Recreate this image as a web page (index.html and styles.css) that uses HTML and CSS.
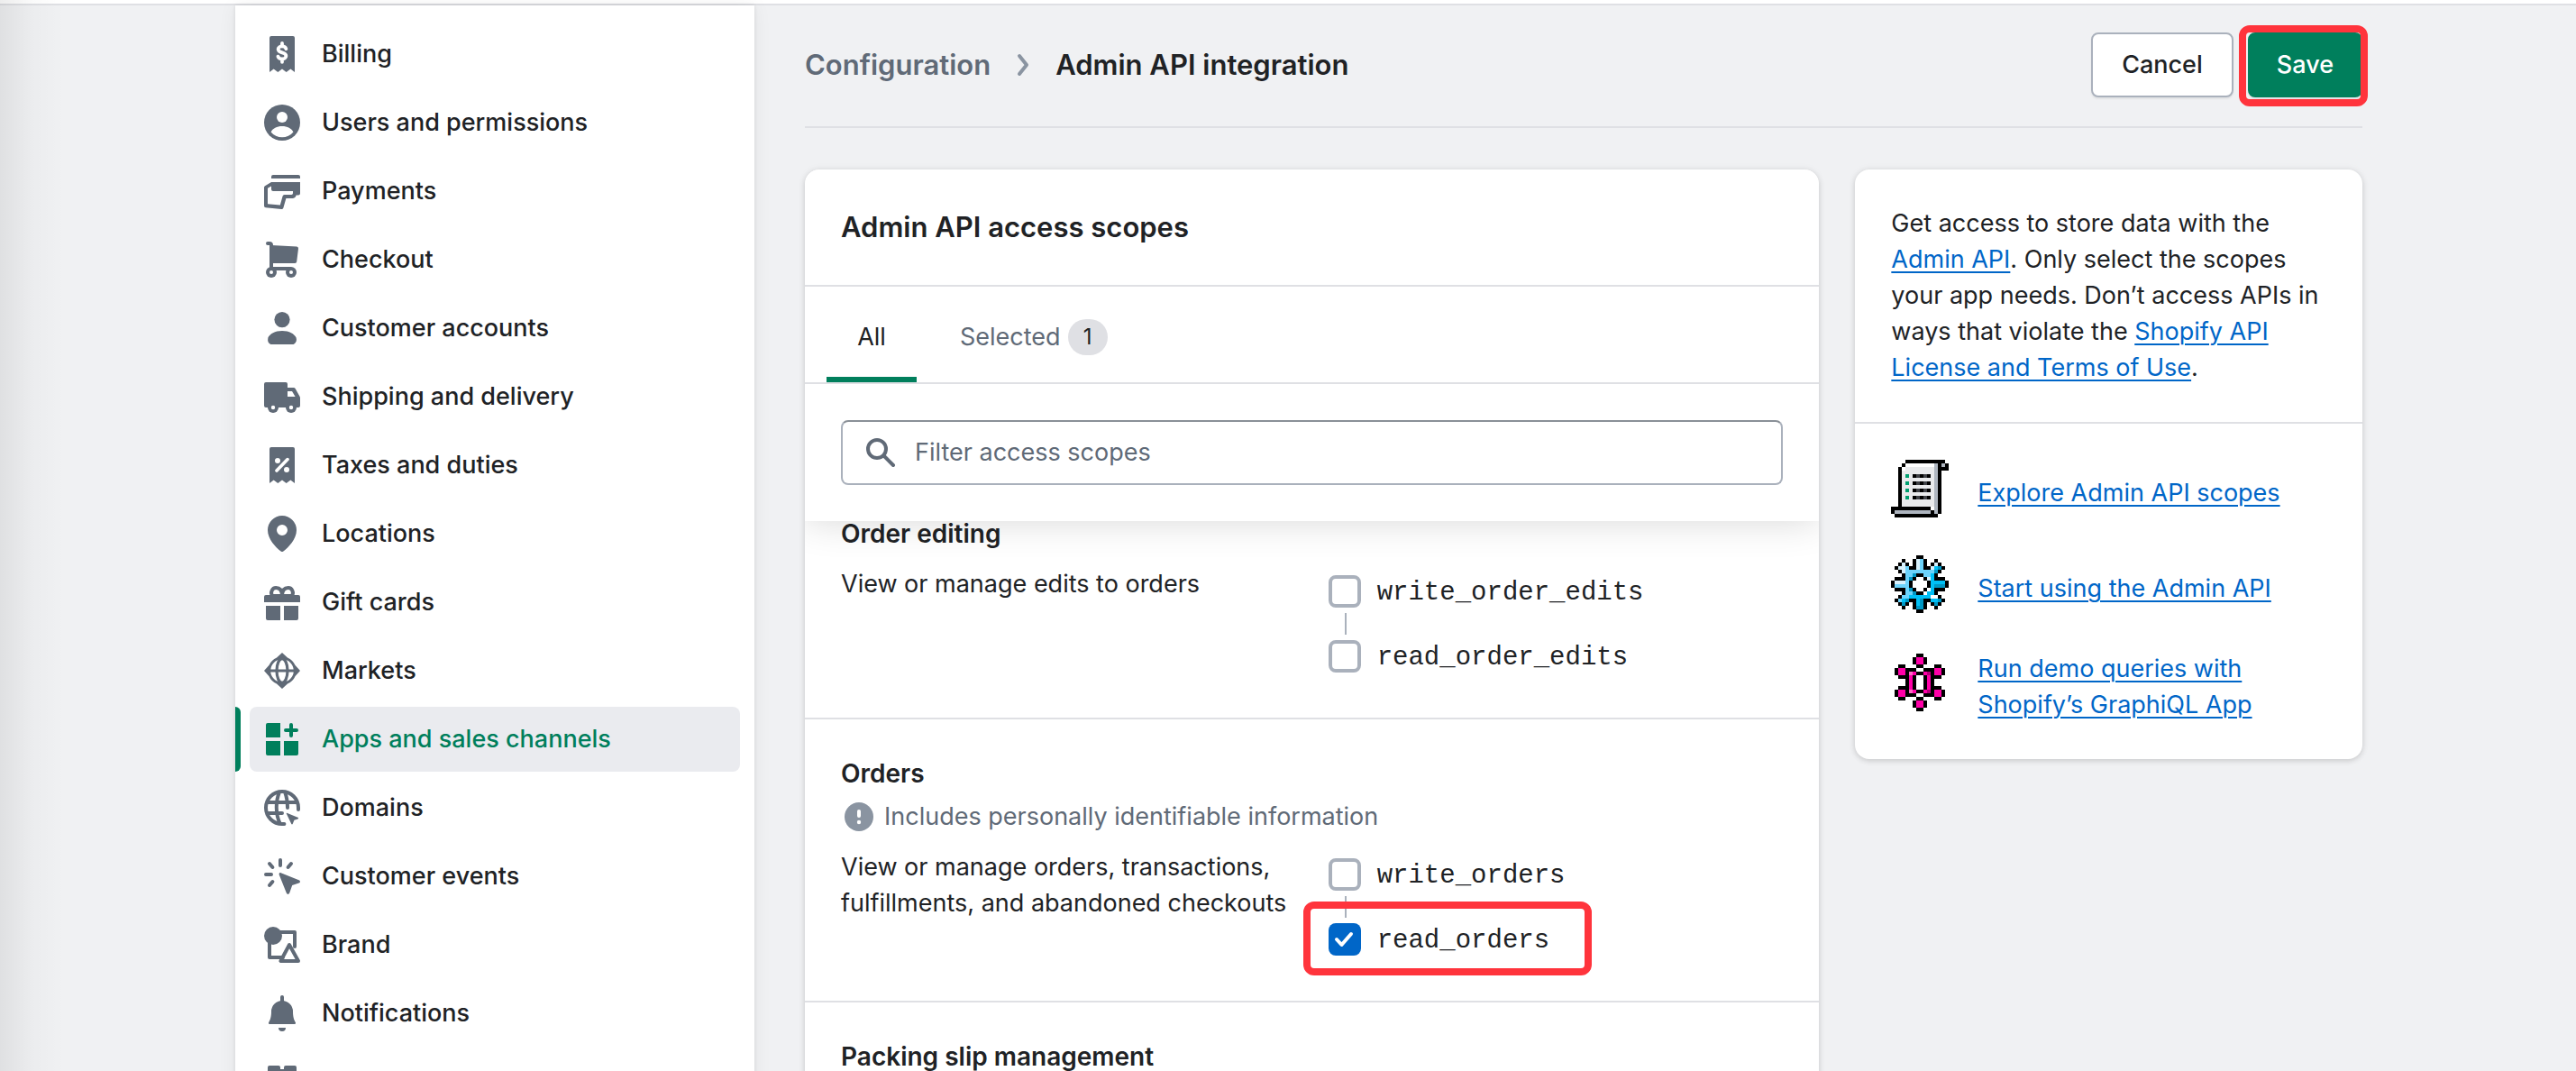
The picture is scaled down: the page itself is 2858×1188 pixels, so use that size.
FILE: index.html
```html
<!DOCTYPE html>
<html lang="en">
<head>
<meta charset="utf-8">
<meta name="viewport" content="width=device-width, initial-scale=1">
<title>Admin API integration</title>
<link rel="stylesheet" href="styles.css">
</head>
<body>
<div class="app">
  <div class="topbar"></div>
  <div class="frame">
    <nav class="sidebar" aria-label="Settings">
      <a class="nav-item" href="#"><svg class="icon" viewBox="0 0 20 20"><path d="M4 0h12a1 1 0 0 1 1 1v19l-2.33-1.8L12.33 20 10 18.2 7.67 20l-2.34-1.8L3 20V1a1 1 0 0 1 1-1z"/><path class="cut-line" stroke-width="1.9" d="M12.2 7.1C11.9 6.1 11 5.7 10 5.7c-1.200 0-2.200.6-2.200 1.600 0 2.500 4.400 1.300 4.400 3.700 0 1.100-1 1.700-2.200 1.700-1.100 0-2-.5-2.300-1.400M10 4v1.400M10 13v1.400"/></svg>Billing</a>
      <a class="nav-item" href="#"><svg class="icon" viewBox="0 0 20 20"><circle cx="10" cy="10" r="10"/><circle class="cut" cx="10" cy="7" r="3"/><path class="cut" d="M10 12c-2.900 0-5.300 1.300-6.200 3.200a8 8 0 0 0 12.400 0C15.300 13.300 12.900 12 10 12z"/></svg>Users and permissions</a>
      <a class="nav-item" href="#"><svg class="icon" viewBox="0 0 20 20"><path d="M5 1h14a1 1 0 0 1 1 1v1H4V2a1 1 0 0 1 1-1z"/><path fill-rule="evenodd" d="M4 5h16v6.200a1 1 0 0 1-1 1h-1.200c-.2 1-1 1.800-2 1.800h-3.600l-1.500 5.200a1 1 0 0 1-1.100.8l-8.700-.9a1 1 0 0 1-.9-1V8a1 1 0 0 1 .5-.9zM4 7.200L2 8.400v8.700l6.900.7 1.400-5a1 1 0 0 1 1-.8h3.900a.9.9 0 0 0 .8-.9V10H5a1 1 0 0 1-1-1z"/></svg>Payments</a>
      <a class="nav-item" href="#"><svg class="icon" viewBox="0 0 20 20"><path class="line" stroke-width="2" d="M2 1h1a1 1 0 0 1 1 1v12.500"/><path d="M4 2l14.100.8a1 1 0 0 1 .9 1.100l-.9 7.200a1 1 0 0 1-1 .9H4zM3 14h12v2H3z"/><circle cx="4" cy="17" r="3"/><circle cx="15" cy="17" r="3"/><circle class="cut" cx="4" cy="17" r="1"/><circle class="cut" cx="15" cy="17" r="1"/></svg>Checkout</a>
      <a class="nav-item" href="#"><svg class="icon" viewBox="0 0 20 20"><circle cx="10" cy="5.300" r="4.300"/><path d="M10 11.500c-4 0-6.800 1.700-7.800 3.800-.4 2 .1 3 1.100 3.400.3.200.6.300.9.300h11.600c.3 0 .6-.1.9-.3 1-.6 1.600-1.700 1.100-3.400-1-2.100-3.800-3.800-7.800-3.800z"/></svg>Customer accounts</a>
      <a class="nav-item" href="#"><svg class="icon" viewBox="0 0 20 20"><path d="M1 2h11a1 1 0 0 1 1 1v2h3.400a1 1 0 0 1 .9.500l2.400 4.200c.2.300.3.600.3 1V15a1 1 0 0 1-1 1H1a1 1 0 0 1-1-1V3a1 1 0 0 1 1-1z"/><path class="cut" d="M13 7h2.500l1.800 3H13z"/><circle cx="5" cy="16" r="3"/><circle cx="15" cy="16" r="3"/><circle class="cut" cx="5" cy="16" r="1.100"/><circle class="cut" cx="15" cy="16" r="1.100"/></svg>Shipping and delivery</a>
      <a class="nav-item" href="#"><svg class="icon" viewBox="0 0 20 20"><path d="M4 0h12a1 1 0 0 1 1 1v19l-2.330-1.800L12.330 20 10 18.200 7.670 20l-2.340-1.800L3 20V1a1 1 0 0 1 1-1z"/><path class="cut-line" stroke-width="1.800" d="M7 13l6-6.200"/><circle class="cut" cx="7.500" cy="7.500" r="1.500"/><circle class="cut" cx="12.500" cy="12.500" r="1.500"/></svg>Taxes and duties</a>
      <a class="nav-item" href="#"><svg class="icon" viewBox="0 0 20 20"><path fill-rule="evenodd" d="M10 0a8 8 0 0 0-8 8c0 5 4.500 9.600 7.300 11.800.4.300 1 .3 1.400 0C13.500 17.600 18 13 18 8a8 8 0 0 0-8-8zm0 5a3 3 0 1 1 0 6 3 3 0 0 1 0-6z"/></svg>Locations</a>
      <a class="nav-item" href="#"><svg class="icon" viewBox="0 0 20 20"><path d="M1 6h18a1 1 0 0 1 1 1v3H0V7a1 1 0 0 1 1-1zM1 12h8v8H2a1 1 0 0 1-1-1zM11 12h8v7a1 1 0 0 1-1 1h-7z"/><path class="line" stroke-width="2" d="M10 6.500H4.600C3.300 4.800 4.400 2 6.600 2 8.800 2 10 3.500 10 6.500zM10 6.500h5.400C16.700 4.800 15.600 2 13.400 2 11.200 2 10 3.500 10 6.500z"/></svg>Gift cards</a>
      <a class="nav-item" href="#"><svg class="icon" viewBox="0 0 20 20"><path fill-rule="evenodd" d="M10 0l3 2.700A8.600 8.600 0 0 1 17.300 7l2.700 3-2.700 3a8.600 8.600 0 0 1-4.300 4.300L10 20l-3-2.700A8.600 8.600 0 0 1 2.700 13L0 10l2.700-3A8.600 8.600 0 0 1 7 2.700zM10 3.600a6.400 6.400 0 1 0 0 12.800 6.400 6.400 0 0 0 0-12.800z"/><path class="line" stroke-width="1.600" d="M3 10h14"/><ellipse class="line" stroke-width="1.600" cx="10" cy="10" rx="3" ry="6.700"/></svg>Markets</a>
      <a class="nav-item nav-item-active" href="#" aria-current="page"><svg class="icon" viewBox="0 0 20 20"><path d="M2 1h7v8H1V2a1 1 0 0 1 1-1zM1 11h8v8H2a1 1 0 0 1-1-1zM11 11h8v7a1 1 0 0 1-1 1h-7z"/><path class="line" stroke-width="2" d="M15 2v6M12 5h6"/></svg>Apps and sales channels</a>
      <a class="nav-item" href="#"><svg class="icon" viewBox="0 0 20 20"><path class="line" stroke-width="2" d="M19 11v-1a9 9 0 1 0-9 9h1.200M1.500 7h17M1.500 13H10M8.500 1.300C6.300 6.500 6.300 13.500 8.800 18.700M11.500 1.300c1 2.500 1.500 5.500 1.500 8.700"/><path d="M12.600 12.900l6.100 2.500c.5.200.5.600 0 .8l-2 .7-.8 2c-.2.500-.6.500-.8 0l-2.700-5.700c-.1-.3 0-.4.200-.3z"/></svg>Domains</a>
      <a class="nav-item" href="#"><svg class="icon" viewBox="0 0 20 20"><path class="line" stroke-width="2" d="M9 1v3M3 3l1.700 2M15 3l-1.700 2M1 9h3M3 15l1.700-2"/><path d="M9.300 8.100l10 4c.9.400.9 1.400 0 1.700L15.600 15l-1.500 4.300c-.4.900-1.300.9-1.700 0l-4-10c-.3-.8.200-1.500.9-1.200z"/></svg>Customer events</a>
      <a class="nav-item" href="#"><svg class="icon" viewBox="0 0 20 20"><path class="line" stroke-width="2" d="M3 9v8h7.500M9 3h8v8M14 10l-4.800 9H19z"/><circle cx="5" cy="5" r="5"/></svg>Brand</a>
      <a class="nav-item" href="#"><svg class="icon" viewBox="0 0 20 20"><path class="line" stroke-width="2" d="M10 1v3"/><path d="M10 3a6 6 0 0 0-6 6c0 3-.6 4.700-1.400 6-.3.500 0 1 .4 1h14c.4 0 .7-.5.4-1-.8-1.300-1.400-3-1.400-6a6 6 0 0 0-6-6zM8 18h4a2 2 0 0 1-4 0z"/></svg>Notifications</a>
      <a class="nav-item" href="#"><svg class="icon" viewBox="0 0 20 20"><path d="M3 1h5a1 1 0 0 1 1 1v1h2V2a1 1 0 0 1 1-1h5a1 1 0 0 1 1 1v16a1 1 0 0 1-1 1H3a1 1 0 0 1-1-1V2a1 1 0 0 1 1-1z"/></svg></a>
    </nav>

    <main class="main">
      <header class="page-header">
        <div class="crumbs">
          <a class="crumb" href="#">Configuration</a>
          <svg class="crumb-arrow" viewBox="0 0 20 20"><path d="M8 5l4 5-4 5"/></svg>
          <h1 class="page-title">Admin API integration</h1>
        </div>
        <div class="actions">
          <button class="btn" type="button">Cancel</button>
          <div class="marked marked-button"><button class="btn btn-primary" type="button">Save</button></div>
        </div>
      </header>

      <div class="columns">
        <section class="card scopes">
          <div class="scopes-head">
            <h2 class="card-title">Admin API access scopes</h2>
            <div class="tabs" role="tablist">
              <button class="tab tab-active" type="button" role="tab" aria-selected="true">All</button>
              <button class="tab" type="button" role="tab" aria-selected="false">Selected<span class="badge">1</span></button>
            </div>
            <div class="filter">
              <label class="field">
                <svg class="icon" viewBox="0 0 20 20"><circle class="line" stroke-width="2" cx="8" cy="8" r="5"/><path class="line" stroke-width="2" d="M12 12l5 5"/></svg>
                <input class="field-input" type="text" placeholder="Filter access scopes" aria-label="Filter access scopes">
              </label>
            </div>
          </div>

          <div class="scope-list">
            <section class="scope">
              <h3 class="scope-title">Order editing</h3>
              <div class="scope-body">
                <p class="scope-text">View or manage edits to orders</p>
                <div class="choices">
                  <label class="choice"><input class="check" type="checkbox"><span class="choice-name">write_order_edits</span></label>
                  <label class="choice choice-linked"><input class="check" type="checkbox"><span class="choice-name">read_order_edits</span></label>
                </div>
              </div>
            </section>
            <section class="scope">
              <h3 class="scope-title">Orders</h3>
              <p class="notice"><svg class="icon" viewBox="0 0 20 20"><circle cx="10" cy="10" r="8"/><path class="cut-line" stroke-width="2" d="M10 7v2.500"/><circle class="cut" cx="10" cy="13" r="1.100"/></svg>Includes personally identifiable information</p>
              <div class="scope-body">
                <p class="scope-text">View or manage orders, transactions, fulfillments, and abandoned checkouts</p>
                <div class="choices">
                  <label class="choice"><input class="check" type="checkbox"><span class="choice-name">write_orders</span></label>
                  <label class="choice choice-linked marked marked-choice"><input class="check" type="checkbox" checked><span class="choice-name">read_orders</span></label>
                </div>
              </div>
            </section>
            <section class="scope">
              <h3 class="scope-title">Packing slip management</h3>
            </section>
          </div>
        </section>

        <aside class="card help">
          <p class="help-text">Get access to store data with the <a href="#">Admin API</a>. Only select the scopes your app needs. Don’t access APIs in ways that violate the <a href="#">Shopify API License and Terms of Use</a>.</p>
          <ul class="help-links">
            <li class="help-link">
              <svg class="pixel" viewBox="0 0 16 16">
                <path fill="#e9eaec" d="M3 2h9v11H3z"/><path fill="#fff" d="M4 1h8v1H4zM3 2h1v1H3z"/>
                <path fill="#aeb5bf" d="M12 1h1v14h-1zM14 1h1v1h-1zM1 14h10v1H1z"/>
                <path d="M4 0h11v1H4zM3 1h1v1H3zM13 1h1v14h-1zM15 1h1v2h-2V2h1zM2 2h1v11H2zM0 13h11v1H1v1H0zM11 14h1v1h-1zM1 15h12v1H1z"/>
                <path fill="#00a070" d="M4 4h1v1H4zM4 6h1v1H4zM4 8h1v1H4zM4 10h1v1H4z"/>
                <path d="M6 4h5v1H6zM6 6h5v1H6zM6 8h5v1H6zM6 10h5v1H6z"/>
                <path fill="#404247" d="M7 4h1v1H7zM9 4h1v1H9zM7 6h1v1H7zM9 6h1v1H9zM7 8h1v1H7zM9 8h1v1H9zM7 10h1v1H7zM9 10h1v1H9z"/>
              </svg>
              <a href="#">Explore Admin API scopes</a>
            </li>
            <li class="help-link">
              <svg class="pixel" viewBox="0 0 16 16">
                <path fill="#6dd3fb" d="M8 1h1v3h3v2h-1v1h-1V6H9V5H7v1H6v1H5v2h1v1h1v1H5v1H4v1H2v-1h1v-2h1V9H1V8h3V4h4zM4 3h1v1H4zM11 3h1v1h-1z"/>
                <path fill="#d8f1fc" d="M7 1h1v3H7zM3 2h1v3H3zM2 3h1v1H2zM12 2h1v1h-1zM11 3h1v1h-1zM1 7h3v1H1zM10 6h1v1h-1z"/>
                <path fill="#00bff5" d="M12 3h1v1h-1zM11 5h1v2h3v1h-3v3h-1v1h2v1h1v1h-1v-1h-1v-1H9v1H8v-1H5v-1h5v-1h1zM7 12h1v2H7zM3 12h1v1H3zM11 12h2v1h-2z"/>
                <path fill="#0097c4" d="M13 3h1v1h-1v1h-1V4h1zM6 5h1v1H6zM5 6h1v1H5zM5 9h1v1H5zM6 10h1v1H6zM12 8h3v1h-3zM13 12h1v1h-1zM12 13h1v1h-1zM3 13h1v1H3zM4 12h1v1H4zM8 12h1v3H7v-1h1z"/>
                <path d="M7 0h2v1H7zM3 1h1v1H3zM6 1h1v3H6zM9 1h1v3H9zM12 1h1v1h-1zM2 2h1v1H2zM4 2h1v1H4zM11 2h1v1h-1zM13 2h1v1h-1zM1 3h1v1H1zM5 3h1v1H5zM10 3h1v1h-1zM14 3h1v1h-1zM2 4h1v1H2zM13 4h1v1h-1zM3 5h1v2H1V6h2zM12 5h1v1h2v1h-3zM0 7h1v2H0zM15 7h1v2h-1zM1 9h3v2H3v-1H1zM12 9h3v1h-2v1h-1zM2 11h1v1H2zM13 11h1v1h-1zM1 12h1v1H1zM5 12h2v3H6v-2H5zM9 12h2v1h-1v2H9zM14 12h1v1h-1zM2 13h1v1H2zM4 13h1v1H4zM11 13h1v1h-1zM13 13h1v1h-1zM3 14h1v1H3zM12 14h1v1h-1zM7 15h2v1H7zM7 5h2v1H7zM6 6h1v1H6zM9 6h1v1H9zM5 7h1v2H5zM10 7h1v2h-1zM6 9h1v1H6zM9 9h1v1H9zM7 10h2v1H7z"/>
              </svg>
              <a href="#">Start using the Admin API</a>
            </li>
            <li class="help-link">
              <svg class="pixel" viewBox="0 0 16 16">
                <path d="M7 0h2v1H7zM6 1h4v2H6zM7 3h2v1H7zM2 3h2v1H2zM12 3h2v1h-2zM1 4h6v1h2V4h6v2h-1v1h-2v2h2v1h1v2H9v-1H7v1H1v-2h1V9h2V7H2V6H1zM2 12h2v1H2zM12 12h2v1h-2zM7 12h2v1H7zM6 13h4v2H6zM7 15h2v1H7z"/>
                <path fill="#fff" d="M7 6h2v4H7z"/>
                <path d="M2 6h2v1H2zM12 6h2v1h-2zM2 9h2v1H2zM12 9h2v1h-2z"/>
                <path fill="#ff00a8" d="M7 1h2v2H7zM7 13h2v2H7zM2 4h2v2H2zM12 4h2v2h-2zM2 10h2v2H2zM12 10h2v2h-2zM5 5h2v1H6v4h1v1H5zM9 5h2v6H9v-1h1V6H9z"/>
                <path fill="#ff6cc6" d="M5 5h1v1H5zM5 10h1v1H5z"/><path fill="#b8007c" d="M10 5h1v1h-1zM10 10h1v1h-1z"/>
              </svg>
              <a href="#">Run demo queries with Shopify’s GraphiQL App</a>
            </li>
          </ul>
        </aside>
      </div>
    </main>
  </div>
</div>
</body>
</html>
```
FILE: styles.css
```css
*,
*::before,
*::after {
  box-sizing: border-box;
}

:root {
  --ink: #202225;
  --muted: #606a77;
  --line: #dfe0e4;
  --edge: #aab1bc;
  --green: #007f5c;
  --blue: #0066c8;
  --mark: #ff343c;
}

body {
  margin: 0;
  background: #f0f1f3;
  color: var(--ink);
  font-family: Inter, "Liberation Sans", sans-serif;
  font-size: 27px;
  line-height: 40px;
}

h1, h2, h3, p, ul {
  margin: 0;
  padding: 0;
}

button, input {
  font: inherit;
  color: inherit;
}

a {
  color: var(--blue);
  text-decoration-thickness: 2px;
  text-underline-offset: 4px;
}

.app {
  position: relative;
  display: flex;
  flex-direction: column;
  height: 100vh;
  overflow: hidden;
}

/* Soft shade along the left window edge */
.app::after {
  content: "";
  position: absolute;
  inset: 0 auto 0 0;
  width: 72px;
  background: linear-gradient(to right, rgba(0, 0, 0, .07), rgba(0, 0, 0, .02) 50%, transparent);
  pointer-events: none;
}

.topbar {
  flex: none;
  height: 6px;
  background: #fff;
  border-bottom: 2px solid var(--line);
}

.frame {
  display: flex;
  width: calc(100% - 80px);
  max-width: 2416px;
  margin: 0 auto;
  translate: 40px 0;
}

/* Sidebar */
.sidebar {
  flex: none;
  width: 576px;
  display: flex;
  flex-direction: column;
  gap: 4px;
  padding: 18px 16px 0;
  background: #fff;
  box-shadow: 0 0 4px rgba(0, 0, 0, .1), 0 0 20px rgba(0, 0, 0, .06);
}

.nav-item {
  position: relative;
  flex: none;
  display: flex;
  align-items: center;
  gap: 24px;
  height: 72px;
  padding: 0 16px;
  border-radius: 8px;
  color: var(--ink);
  font-weight: 500;
  text-decoration: none;
}

.nav-item-active {
  background: #eaebef;
  color: var(--green);
}

.nav-item-active::before {
  content: "";
  position: absolute;
  inset: 0 auto 0 -16px;
  width: 6px;
  border-radius: 0 8px 8px 0;
  background: var(--green);
}

.icon {
  flex: none;
  width: 40px;
  height: 40px;
  fill: var(--muted);
  stroke: var(--muted);
  stroke-width: 0;
}

.nav-item-active .icon {
  fill: var(--green);
  stroke: var(--green);
}

.line {
  fill: none;
  stroke-linecap: round;
  stroke-linejoin: round;
}

.cut {
  fill: #fff;
}

.cut-line {
  fill: none;
  stroke: #fff;
  stroke-linecap: round;
}

/* Main column */
.main {
  flex: 1;
  min-width: 0;
  padding: 0 56px;
}

.page-header {
  display: flex;
  justify-content: space-between;
  align-items: center;
  margin-bottom: 46px;
  padding: 30px 0 32px;
  border-bottom: 2px solid var(--line);
}

.crumbs {
  display: flex;
  align-items: center;
  gap: 16px;
  font-size: 31px;
}

.crumb {
  color: var(--muted);
  font-weight: 600;
  text-decoration: none;
}

.crumb-arrow {
  width: 40px;
  height: 40px;
  fill: none;
  stroke: #8a94a1;
  stroke-width: 2;
  stroke-linecap: round;
  stroke-linejoin: round;
}

.page-title {
  font-size: 31px;
  font-weight: 600;
}

.actions {
  display: flex;
  gap: 16px;
}

.btn {
  height: 72px;
  padding: 0 32px;
  border: 2px solid var(--edge);
  border-radius: 8px;
  background: #fff;
  box-shadow: 0 2px 2px rgba(0, 0, 0, .06);
  font-weight: 500;
}

.btn-primary {
  padding: 0 30px;
  border-color: var(--green);
  background: var(--green);
  color: #fff;
}

/* Red highlight drawn round a control */
.marked {
  position: relative;
}

.marked::after {
  content: "";
  position: absolute;
  border: 8px solid var(--mark);
  border-radius: 12px;
  pointer-events: none;
}

.marked-button::after {
  inset: -8px -6px -10px -10px;
}

.marked-choice::after {
  inset: -14px auto -12px -28px;
  width: 320px;
}

.columns {
  display: grid;
  grid-template-columns: 2fr 1fr;
  align-items: start;
  gap: 40px;
}

.card {
  overflow: hidden;
  border-radius: 16px;
  background: #fff;
  box-shadow: 0 0 10px rgba(23, 24, 24, .06), 0 2px 6px rgba(0, 0, 0, .13);
}

.scopes-head {
  position: relative;
  z-index: 1;
  background: #fff;
  box-shadow: 0 0 40px rgba(0, 0, 0, .16);
}

.card-title {
  padding: 44px 40px;
  border-bottom: 2px solid var(--line);
  font-size: 31px;
  font-weight: 600;
}

.tabs {
  display: flex;
  gap: 16px;
  height: 108px;
  padding: 0 24px;
  border-bottom: 2px solid var(--line);
}

.tab {
  display: flex;
  justify-content: center;
  align-items: center;
  gap: 8px;
  min-width: 100px;
  padding: 12px 32px 0;
  border: 0;
  border-bottom: 6px solid transparent;
  border-radius: 4px 4px 0 0;
  background: none;
  color: var(--muted);
}

.tab-active {
  border-bottom-color: var(--green);
  color: var(--ink);
}

.badge {
  min-width: 44px;
  border-radius: 20px;
  background: var(--line);
  color: var(--ink);
  font-size: 24px;
  text-align: center;
}

.filter {
  padding: 40px;
}

.field {
  display: flex;
  align-items: center;
  gap: 18px;
  height: 72px;
  padding: 0 22px;
  border: 2px solid var(--edge);
  border-top-color: #8a9097;
  border-radius: 8px;
}

.field-input {
  flex: 1;
  min-width: 0;
  padding: 0;
  border: 0;
  outline: 0;
  background: none;
}

.field-input::placeholder {
  color: var(--muted);
  opacity: 1;
}

/* List is scrolled partly under the sticky head */
.scope-list {
  margin-top: -46px;
}

.scope {
  padding: 40px;
}

.scope + .scope {
  border-top: 2px solid var(--line);
}

.scope-title {
  font-size: 28px;
  font-weight: 600;
}

.notice {
  display: flex;
  align-items: center;
  gap: 8px;
  margin-top: 8px;
  color: var(--muted);
}

.notice .icon {
  fill: #8a94a1;
}

.scope-body {
  display: grid;
  grid-template-columns: 1fr 1fr;
  gap: 36px;
  margin-top: 16px;
}

.choices {
  display: flex;
  flex-direction: column;
  gap: 16px;
}

.choice {
  position: relative;
  display: flex;
  align-items: center;
  gap: 18px;
  height: 56px;
  font-family: "Liberation Mono", monospace;
  font-size: 29px;
}

.choice-name {
  padding-top: 4px;
}

.choice-linked::before {
  content: "";
  position: absolute;
  top: -20px;
  left: 18px;
  width: 2px;
  height: 24px;
  background: var(--edge);
}

.check {
  appearance: none;
  flex: none;
  width: 36px;
  height: 36px;
  margin: 0;
  border: 4px solid var(--edge);
  border-radius: 8px;
  background: #fff;
}

.check:checked {
  border: 0;
  background: var(--blue) url("data:image/svg+xml,%3Csvg xmlns='http://www.w3.org/2000/svg' viewBox='0 0 36 36'%3E%3Cpath d='M9 18l5.500 6L25 12' fill='none' stroke='%23fff' stroke-width='4' stroke-linecap='round' stroke-linejoin='round'/%3E%3C/svg%3E");
}

/* Help card */
.help-text {
  padding: 40px;
  border-bottom: 2px solid var(--line);
}

.help-links {
  display: flex;
  flex-direction: column;
  gap: 32px;
  padding: 40px;
  list-style: none;
}

.help-link {
  display: flex;
  align-items: center;
  gap: 32px;
}

.pixel {
  flex: none;
  width: 64px;
  height: 74px;
  padding-bottom: 10px;
  shape-rendering: crispEdges;
}
```
